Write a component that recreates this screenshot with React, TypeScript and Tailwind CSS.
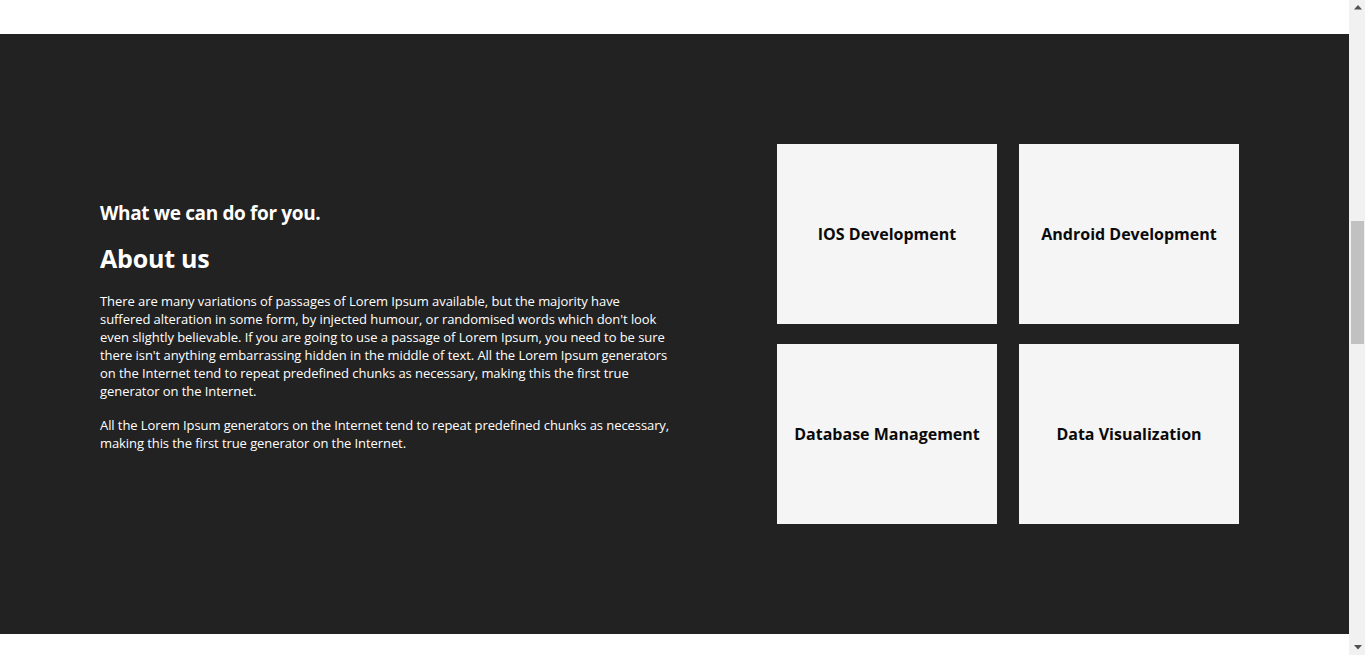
import React from "react";

const cards = [
  "IOS Development",
  "Android Development",
  "Database Management",
  "Data Visualization",
];

function Scrollbar() {
  return (
    <div className="w-[16px] h-[655px] bg-[#f1f1f1] flex flex-col items-center shrink-0">
      <div className="h-[17px] w-full flex items-center justify-center">
        <svg width="8" height="5" viewBox="0 0 8 5" className="ml-[1px] -mt-[2px]">
          <polygon points="4,0 8,4.5 0,4.5" fill="#505050" />
        </svg>
      </div>
      <div className="flex-1 w-full">
        <div className="ml-[2px] mt-[204px] w-[13px] h-[123px] bg-[#c1c1c1]" />
      </div>
      <div className="h-[17px] w-full flex items-center justify-center">
        <svg width="8" height="5" viewBox="0 0 8 5" className="ml-[1px] mt-[1px]">
          <polygon points="0,0 8,0 4,4.5" fill="#505050" />
        </svg>
      </div>
    </div>
  );
}

export default function App() {
  return (
    <div
      className="h-[655px] overflow-hidden flex bg-white"
      style={{ fontFamily: "'Open Sans', 'Noto Sans', sans-serif" }}
    >
      <main className="flex-1 flex flex-col">
        <div className="h-[34px] bg-white" />
        <section className="h-[600px] bg-[#222222] flex items-start justify-between pl-[100px] pr-[110px]">
          <div className="w-[600px] pt-[166px] text-white">
            <h3 className="text-[19px] font-bold leading-[26px] tracking-[-0.35px]">What we can do for you.</h3>
            <h2 className="text-[25px] font-bold leading-[34px] mt-[15px] tracking-[-0.2px]">About us</h2>
            <p className="text-[13px] leading-[18px] mt-[17px] whitespace-nowrap tracking-[-0.06px]">
              There are many variations of passages of Lorem Ipsum available, but the majority have<br />
              suffered alteration in some form, by injected humour, or randomised words which don't look<br />
              even slightly believable. If you are going to use a passage of Lorem Ipsum, you need to be sure<br />
              there isn't anything embarrassing hidden in the middle of text. All the Lorem Ipsum generators<br />
              on the Internet tend to repeat predefined chunks as necessary, making this the first true<br />
              generator on the Internet.
            </p>
            <p className="text-[13px] leading-[18px] mt-[16px] whitespace-nowrap tracking-[-0.08px]">
              All the Lorem Ipsum generators on the Internet tend to repeat predefined chunks as necessary,<br />
              making this the first true generator on the Internet.
            </p>
          </div>
          <div className="pt-[110px] grid grid-cols-[220px_220px] gap-x-[22px] gap-y-[20px]">
            {cards.map((c) => (
              <div key={c} className="h-[180px] bg-[#f5f5f5] flex items-center justify-center">
                <span className="text-[16px] font-bold leading-[24px] text-[#0a0a0a]">{c}</span>
              </div>
            ))}
          </div>
        </section>
        <div className="flex-1 bg-white" />
      </main>
      <Scrollbar />
    </div>
  );
}
